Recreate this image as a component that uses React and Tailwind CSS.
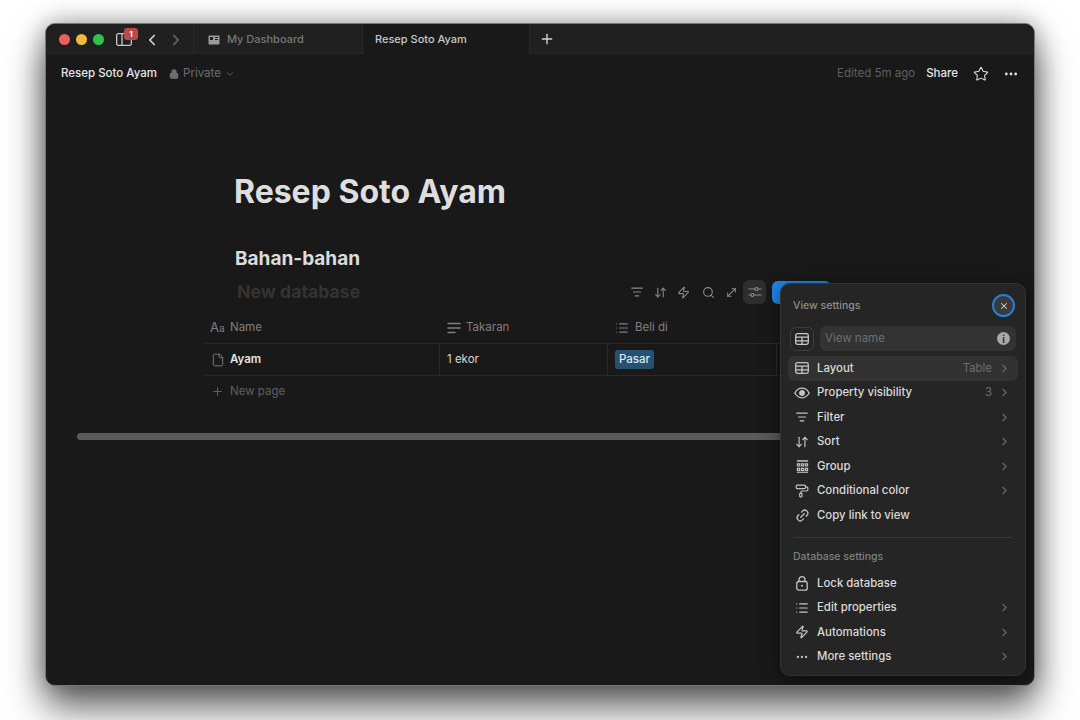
import React from 'react';
import {
  ArrowDownUp, ChevronDown, ChevronLeft, ChevronRight, Ellipsis, File, Link2, List, Lock,
  MoveDiagonal, PaintRoller, Plus, Search, Star, X, Zap,
} from 'lucide-react';

function Lines({ size = 15, className = '' }) {
  return (
    <svg width={size} height={size} viewBox="0 0 16 16" fill="none" stroke="currentColor" strokeWidth="1.4" strokeLinecap="round" className={className}>
      <path d="M2 3.5h12M4 8h8M6 12.5h4" />
    </svg>
  );
}

function TextLines() {
  return (
    <svg width="14" height="14" viewBox="0 0 14 14" fill="none" stroke="currentColor" strokeWidth="1.4" strokeLinecap="round">
      <path d="M1 2.5h12M1 7h12M1 11.5h7" />
    </svg>
  );
}

function TableIcon() {
  return (
    <svg width="14" height="12" viewBox="0 0 14 12" fill="none" stroke="currentColor" strokeWidth="1.3">
      <rect x="0.700" y="0.700" width="12.600" height="10.600" rx="1.800" />
      <path d="M0.700 4.200h12.600M0.700 7.800h12.600M7 4.200v7" />
    </svg>
  );
}

function EyeIcon() {
  return (
    <svg width="16" height="12" viewBox="0 0 16 12" fill="none" stroke="currentColor" strokeWidth="1.300">
      <path d="M0.800 6C2.600 2.800 5 1.200 8 1.200S13.400 2.800 15.200 6C13.400 9.200 11 10.800 8 10.800S2.600 9.200 0.800 6z" />
      <circle cx="8" cy="6" r="2.300" fill="currentColor" />
    </svg>
  );
}

function GroupIcon() {
  return (
    <svg width="13" height="13" viewBox="0 0 14 14" fill="none" stroke="currentColor" strokeWidth="1.200">
      <path d="M1 1h12" strokeWidth="1.600" />
      <path d="M1.500 4.200h2.400v2.200H1.500zM5.800 4.200h2.400v2.200H5.800zM10.100 4.200h2.400v2.200h-2.400zM1.500 9h2.400v2.200H1.500zM5.800 9h2.400v2.200H5.800zM10.100 9h2.400v2.200h-2.400z" />
      <path d="M1 13.200h12" />
    </svg>
  );
}

function DashIcon() {
  return (
    <svg width="12" height="10" viewBox="0 0 12 10">
      <rect x="0.500" y="0.500" width="11" height="9" rx="1" fill="#9a9a9a" />
      <rect x="2" y="2" width="3" height="3" fill="#202020" />
      <path d="M7 2.500h3M7 4.500h3" stroke="#202020" strokeWidth="1" />
    </svg>
  );
}

function PanelIcon() {
  return (
    <svg width="16" height="13" viewBox="0 0 16 13" fill="none" stroke="currentColor" strokeWidth="1.300">
      <rect x="0.700" y="0.700" width="14.600" height="11.600" rx="1.500" />
      <path d="M6 0.700v11.600" />
    </svg>
  );
}

function LockIcon() {
  return (
    <svg width="12" height="15" viewBox="0 0 12 15" fill="none" stroke="currentColor" strokeWidth="1.300">
      <rect x="0.800" y="5.500" width="10.400" height="8.700" rx="2" />
      <path d="M3 5.500V3.700a3 3 0 0 1 6 0v1.800" />
      <circle cx="6" cy="9.800" r="1" fill="currentColor" stroke="none" />
    </svg>
  );
}

function SlidersIcon() {
  return (
    <svg width="14" height="12" viewBox="0 0 14 12" fill="none" stroke="currentColor" strokeWidth="1.200">
      <path d="M0.500 3h6.500M10 3h3.500M0.500 9H3M6 9h7.500" />
      <circle cx="8.500" cy="3" r="1.500" />
      <circle cx="4.500" cy="9" r="1.500" />
    </svg>
  );
}

function InfoDot() {
  return (
    <span className="flex h-[13px] w-[13px] items-center justify-center rounded-full bg-[#a8a8a8] text-[10px] font-bold leading-none text-[#333]">i</span>
  );
}

function MenuRow({ icon, label, value, arrow = true, active = false }) {
  return (
    <div className={`flex h-[24.5px] items-center rounded-md pl-[6px] pr-[7px] ${active ? 'bg-[#323232]' : ''}`}>
      <span className="flex w-[16px] justify-center text-[#c4c4c4]">{icon}</span>
      <span className="ml-[7px] flex-1 text-[11.400px] font-medium text-[#d9d9d9]">{label}</span>
      {value && <span className="mr-[6px] text-[11.400px] text-[#6e6e6e]">{value}</span>}
      {arrow && <ChevronRight size={13} className="text-[#6a6a6a]" />}
    </div>
  );
}

export default function App() {
  return (
    <div className="h-[720px] w-[1080px] overflow-hidden bg-white pl-[45px] pt-[23px] font-['Inter',sans-serif]">
      <div className="relative flex h-[663px] w-[990px] flex-col overflow-hidden rounded-[10px] border border-[#777] bg-[#191919] shadow-[0_22px_38px_rgba(0,0,0,0.6),0_0_26px_rgba(0,0,0,0.35)]">
        {/* title bar */}
        <div className="flex h-[30px] shrink-0 items-center border-b border-[#262626] bg-[#202020]">
          <div className="flex w-[147px] items-center pl-[13px] pt-[2px]">
            <span className="h-[11px] w-[11px] rounded-full bg-[#ec5f5a]" />
            <span className="ml-[6px] h-[11px] w-[11px] rounded-full bg-[#f2b83a]" />
            <span className="ml-[6px] h-[11px] w-[11px] rounded-full bg-[#2fc24f]" />
            <span className="relative ml-[12px] text-[#c9c9c9]">
              <PanelIcon />
              <span className="absolute left-[8px] top-[-5px] flex h-[12px] w-[14px] items-center justify-center rounded-[3px] bg-[#b84a4a] text-[8px] font-bold text-white">1</span>
            </span>
            <ChevronLeft size={18} strokeWidth={2.200} className="ml-[11px] text-[#d8d8d8]" />
            <ChevronRight size={18} strokeWidth={2.200} className="ml-[6px] text-[#6a6a6a]" />
          </div>
          <div className="flex h-full w-[169px] items-center border-l border-[#292929] pl-[14px] pt-[2px] text-[11px] font-medium text-[#777]">
            <DashIcon />
            <span className="ml-[7px]">My Dashboard</span>
          </div>
          <div className="flex h-[30px] w-[168px] items-center border-x border-[#292929] bg-[#191919] pl-[12px] pt-[2px] text-[11px] font-medium text-[#c8c8c8]">Resep Soto Ayam</div>
          <Plus size={16} className="ml-[9px] mt-[1px] text-[#d5d5d5]" />
        </div>

        {/* page bar */}
        <div className="flex h-[38px] shrink-0 items-center pl-[15px] pr-[15px] pt-[2px] text-[11.500px]">
          <span className="font-medium text-[#e6e6e6]">Resep Soto Ayam</span>
          <Lock size={10} strokeWidth={2.500} className="ml-[12px] fill-[#6e6e6e] text-[#6e6e6e]" />
          <span className="ml-[4px] text-[#6e6e6e]">Private</span>
          <ChevronDown size={10} className="ml-[4px] text-[#6e6e6e]" />
          <span className="ml-auto text-[#5f5f5f]">Edited 5m ago</span>
          <span className="ml-[11px] font-medium text-[#e6e6e6]">Share</span>
          <Star size={16} strokeWidth={1.600} className="ml-[15px] text-[#e0e0e0]" />
          <Ellipsis size={16} strokeWidth={2.200} className="ml-[14px] text-[#e0e0e0]" />
        </div>

        {/* document */}
        <div className="pl-[188px] pt-[79px]">
          <h1 className="h-[42px] text-[32px] font-bold leading-[42px] text-[#dedede]">Resep Soto Ayam</h1>
          <h2 className="ml-[1px] mt-[33px] h-[26px] text-[19px] font-bold leading-[26px] text-[#dcdcdc]">Bahan-bahan</h2>
          <div className="mt-[7px] flex h-[26px] w-[597px] items-center">
            <span className="ml-[3px] text-[17.700px] font-bold text-[#333]">New database</span>
            <div className="ml-auto flex items-center text-[#8a8a8a]">
              <Lines size={14} />
              <ArrowDownUp size={13} className="ml-[10px]" />
              <Zap size={13} className="ml-[10px]" />
              <Search size={13} className="ml-[12px]" />
              <MoveDiagonal size={13} className="ml-[10px]" />
              <span className="ml-[5px] flex h-[24px] w-[23px] items-center justify-center rounded-md bg-[#2e2e2e]"><SlidersIcon /></span>
              <span className="ml-[6px] h-[23px] w-[59px] rounded-md bg-[#2185ea]" />
            </div>
          </div>
        </div>

        {/* table */}
        <div className="ml-[158px] mt-[7px] w-[620px] text-[11.500px]">
          <div className="flex h-[32px] items-center border-b border-[#2b2b2b] text-[#7f7f7f]">
            <div className="flex w-[236px] items-center pl-[6px]">
              <span className="w-[20px] text-[13px] leading-none">A<span className="text-[10px]">a</span></span>
              <span>Name</span>
            </div>
            <div className="flex w-[168px] items-center gap-[5px] pl-[7px]"><TextLines />Takaran</div>
            <div className="flex w-[169px] items-center gap-[6px] pl-[7px]"><List size={14} />Beli di</div>
          </div>
          <div className="flex h-[32px] items-center border-b border-[#2b2b2b] text-[#d8d8d8]">
            <div className="flex h-full w-[236px] items-center border-r border-[#2b2b2b] pl-[7px]">
              <File size={14} strokeWidth={1.400} className="text-[#8a8a8a]" />
              <span className="ml-[5px] font-semibold text-[#e5e5e5]">Ayam</span>
            </div>
            <div className="flex h-full w-[168px] items-center border-r border-[#2b2b2b] pl-[7px]">1 ekor</div>
            <div className="flex h-full w-[169px] items-center border-r border-[#2b2b2b] pl-[7px]">
              <span className="rounded-[3px] bg-[#28506f] px-[4px] py-[1px] font-medium text-[#dfe9f0]">Pasar</span>
            </div>
          </div>
          <div className="flex h-[31px] items-center pl-[7px] text-[#5f5f5f]">
            <Plus size={13} />
            <span className="ml-[6px]">New page</span>
          </div>
        </div>

        {/* scrollbar */}
        <div className="ml-[31px] mt-[26px] h-[7px] w-[720px] rounded-full bg-[#5a5a5a]" />

        {/* view settings popover */}
        <div className="absolute bottom-[9px] right-[8px] top-[259px] w-[246px] rounded-[10px] border border-[#333] bg-[#252525] px-[7px] shadow-[0_4px_18px_rgba(0,0,0,0.5)]">
          <div className="flex h-[42px] items-center justify-between pl-[5px] pr-[2px] pt-[1px]">
            <span className="text-[10.500px] font-medium text-[#8c8c8c]">View settings</span>
            <span className="mr-[1px] flex h-[23px] w-[23px] items-center justify-center rounded-full border-2 border-[#2a7fd4] bg-[#3a3a3a]">
              <X size={10} strokeWidth={2.500} className="text-[#cfcfcf]" />
            </span>
          </div>
          <div className="flex h-[25px] items-center px-[2px]">
            <span className="flex h-[24px] w-[24px] items-center justify-center rounded-md border border-[#3d3d3d] text-[#c8c8c8]"><TableIcon /></span>
            <div className="ml-[6px] flex h-[25px] flex-1 items-center rounded-md bg-[#333] pl-[5px] pr-[6px]">
              <span className="flex-1 text-[11.500px] text-[#6f6f6f]">View name</span>
              <InfoDot />
            </div>
          </div>
          <div className="mt-[5px]">
            <MenuRow active icon={<TableIcon />} label="Layout" value="Table" />
            <MenuRow icon={<EyeIcon />} label="Property visibility" value="3" />
            <MenuRow icon={<Lines size={14} />} label="Filter" />
            <MenuRow icon={<ArrowDownUp size={14} />} label="Sort" />
            <MenuRow icon={<GroupIcon />} label="Group" />
            <MenuRow icon={<PaintRoller size={14} />} label="Conditional color" />
            <MenuRow icon={<Link2 size={15} className="-rotate-45" />} label="Copy link to view" arrow={false} />
          </div>
          <div className="mx-[6px] mb-[10px] mt-[9px] border-t border-[#3a3a3a]" />
          <div className="flex h-[18px] items-center pl-[5px] text-[10.500px] font-medium text-[#7f7f7f]">Database settings</div>
          <div className="mt-[5.500px]">
            <MenuRow icon={<LockIcon />} label="Lock database" arrow={false} />
            <MenuRow icon={<List size={14} />} label="Edit properties" />
            <MenuRow icon={<Zap size={14} />} label="Automations" />
            <MenuRow icon={<Ellipsis size={14} />} label="More settings" />
          </div>
        </div>
      </div>
    </div>
  );
}
